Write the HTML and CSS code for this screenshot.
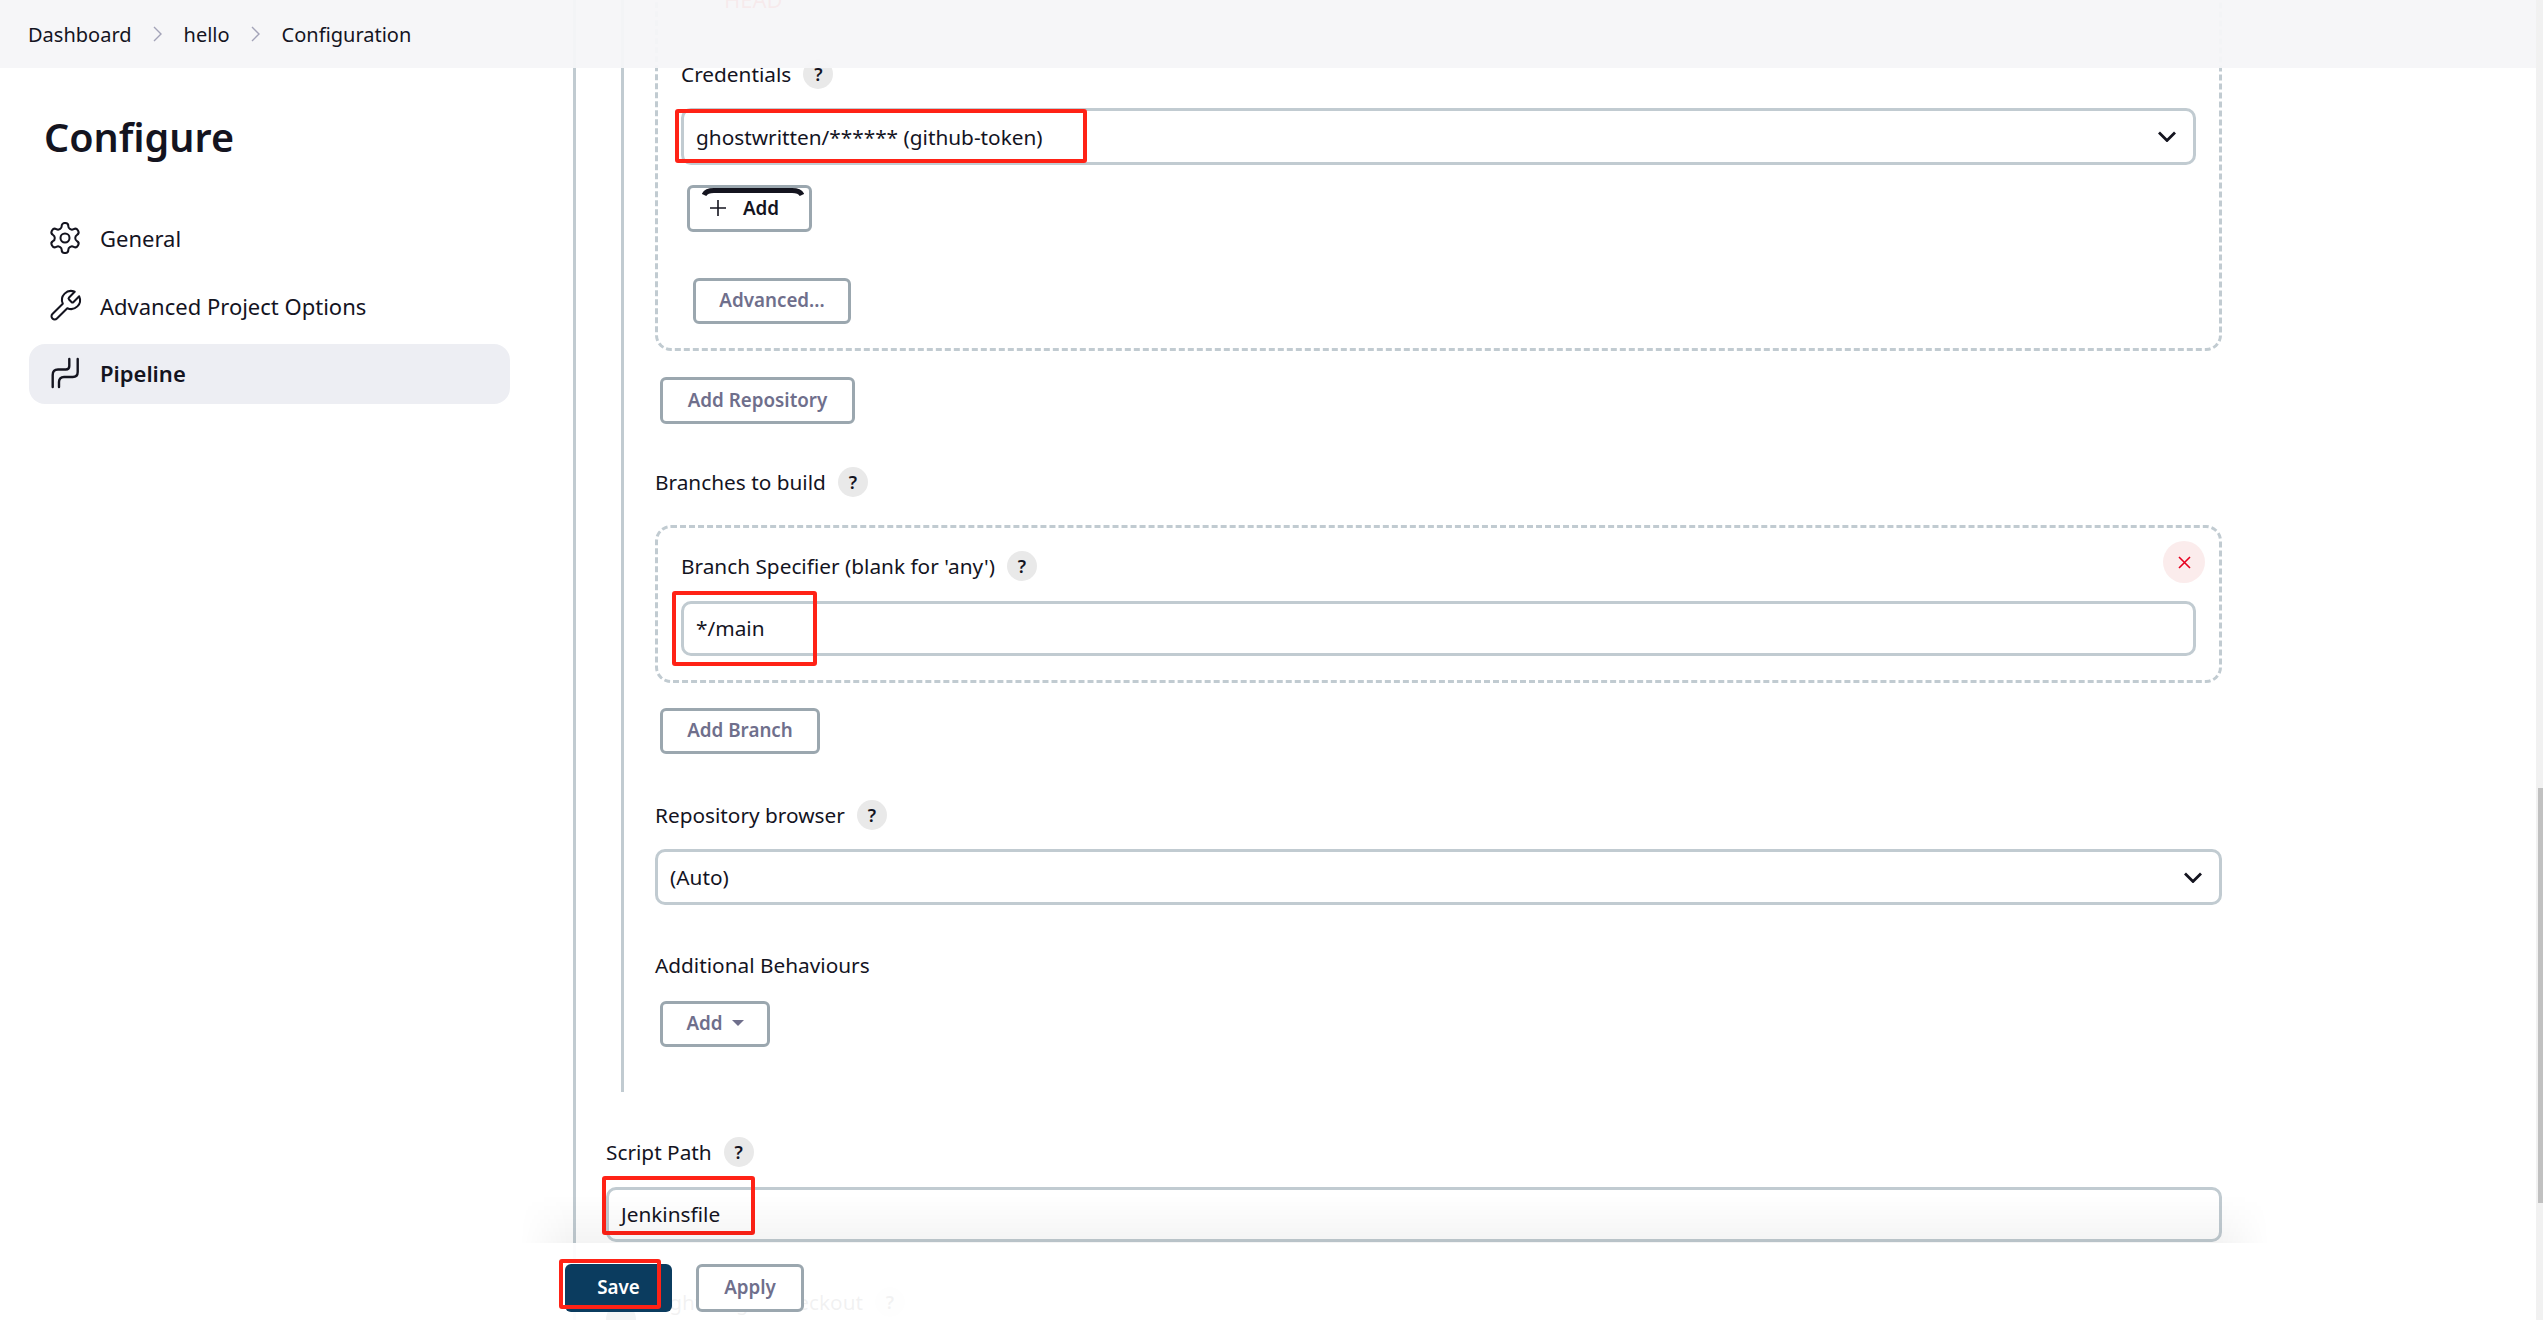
FILE: index.html
```html
<!DOCTYPE html>
<html lang="en">
<head>
    <meta charset="UTF-8">
    <title>hello Config - Jenkins</title>
    <link rel="stylesheet" href="styles.css">
</head>
<body>
    <div class="page">
        <aside class="sidebar">
            <h1>Configure</h1>
            <nav class="side-nav">
                <a class="nav-item">
                    <svg class="nav-icon" viewBox="2 2 20 20"><path d="M12.22 2h-.44a2 2 0 0 0-2 2v.18a2 2 0 0 1-1 1.73l-.43.25a2 2 0 0 1-2 0l-.15-.08a2 2 0 0 0-2.73.73l-.22.38a2 2 0 0 0 .73 2.73l.15.1a2 2 0 0 1 1 1.72v.51a2 2 0 0 1-1 1.74l-.15.09a2 2 0 0 0-.73 2.73l.22.38a2 2 0 0 0 2.73.73l.15-.08a2 2 0 0 1 2 0l.43.25a2 2 0 0 1 1 1.73V20a2 2 0 0 0 2 2h.44a2 2 0 0 0 2-2v-.18a2 2 0 0 1 1-1.73l.43-.25a2 2 0 0 1 2 0l.15.08a2 2 0 0 0 2.73-.73l.22-.39a2 2 0 0 0-.73-2.73l-.15-.08a2 2 0 0 1-1-1.74v-.5a2 2 0 0 1 1-1.74l.15-.09a2 2 0 0 0 .73-2.73l-.22-.38a2 2 0 0 0-2.73-.73l-.15.08a2 2 0 0 1-2 0l-.43-.25a2 2 0 0 1-1-1.73V4a2 2 0 0 0-2-2z"/><circle cx="12" cy="12" r="3"/></svg>
                    General
                </a>
                <a class="nav-item">
                    <svg class="nav-icon" viewBox="2 2 20 20"><path d="M14.7 6.3a1 1 0 0 0 0 1.4l1.6 1.6a1 1 0 0 0 1.4 0l3.77-3.77a6 6 0 0 1-7.94 7.94l-6.91 6.91a2.12 2.12 0 0 1-3-3l6.91-6.91a6 6 0 0 1 7.94-7.94l-3.76 3.76z"/></svg>
                    Advanced Project Options
                </a>
                <a class="nav-item active">
                    <svg class="nav-icon pipeline-icon" viewBox="0 0 30 30"><path d="M27.7 1v13q0 5-5 5H14q-5 0-5 5v5"/><path d="M19.3 1v7q0 3.5-3.5 3.5H8q-5.3 0-5.3 5.5v12"/></svg>
                    Pipeline
                </a>
            </nav>
        </aside>

        <main class="main">
            <div class="scm-section">
                <div class="repeat-box first-box">
                    <div class="ghost-head">HEAD</div>
                    <div class="label-row credentials-row">Credentials <span class="help">?</span></div>
                    <div class="field select">
                        ghostwritten/****** (github-token)
                        <svg class="chevron" viewBox="0 0 18 11"><path d="M1 1.5l8 8 8-8"/></svg>
                        <div class="mark mark-cred"></div>
                    </div>
                    <button class="btn btn-cred">
                        <svg class="arc" viewBox="0 0 102 8"><path d="M2 7Q4 2.500 12 2.500H90Q98 2.500 100 7"/></svg>
                        <svg class="plus" viewBox="0 0 16 16"><path d="M8 0v16M0 8h16"/></svg>
                        Add
                    </button>
                    <button class="btn btn-advanced">Advanced...</button>
                </div>
                <button class="btn btn-block btn-add-repo">Add Repository</button>

                <div class="label-row branches-row">Branches to build <span class="help">?</span></div>
                <div class="repeat-box branch-box">
                    <button class="remove-btn"><svg viewBox="0 0 13 13"><path d="M1 1l11 11M12 1L1 12"/></svg></button>
                    <div class="label-row">Branch Specifier (blank for 'any') <span class="help">?</span></div>
                    <div class="field branch-field">
                        */main
                        <div class="mark mark-branch"></div>
                    </div>
                </div>
                <button class="btn btn-block btn-add-branch">Add Branch</button>

                <div class="label-row browser-row">Repository browser <span class="help">?</span></div>
                <div class="field select browser-field">
                    (Auto)
                    <svg class="chevron" viewBox="0 0 18 11"><path d="M1 1.500l8 8 8-8"/></svg>
                </div>

                <div class="label-row behaviours-row">Additional Behaviours</div>
                <button class="btn btn-block btn-behaviours">Add <span class="caret"></span></button>
            </div>

            <div class="label-row script-row">Script Path <span class="help">?</span></div>
            <div class="field script-field">
                Jenkinsfile
                <div class="mark mark-script"></div>
            </div>
            <div class="label-row checkout-row"><span class="checkbox"></span>Lightweight checkout <span class="help">?</span></div>
        </main>

        <div class="scrollbar"><div class="scrollbar-thumb"></div></div>

        <!-- sticky bars sit over the scrolling form -->
        <header class="topbar">
            <span>Dashboard</span>
            <svg class="crumb-sep" viewBox="0 0 10 16"><path d="M1 1l7 7-7 7"/></svg>
            <span>hello</span>
            <svg class="crumb-sep" viewBox="0 0 10 16"><path d="M1 1l7 7-7 7"/></svg>
            <span>Configuration</span>
        </header>

        <footer class="bottom-bar">
            <button class="btn btn-save">Save<div class="mark mark-save"></div></button>
            <button class="btn btn-apply">Apply</button>
        </footer>
    </div>
</body>
</html>
```

FILE: styles.css
```css
:root {
    --text: #14141f;
    --muted: #6f6f8c;
    --line: #c1cbd1;
    --btn-border: #9ba7af;
    --red: #ff2216;
}

* {
    margin: 0;
    padding: 0;
    box-sizing: border-box;
}

html, body {
    height: 100%;
    overflow: hidden;
}

body {
    font-family: "Noto Sans", sans-serif;
    font-size: 20.8px;
    color: var(--text);
    background: #fff;
}

.page {
    position: relative;
    display: flex;
    height: 1320px;
    overflow: hidden;
}

/* sidebar */
.sidebar {
    flex: 0 0 573px;
    padding: 113px 0 0 29px;
}

.sidebar h1 {
    padding-left: 15px;
    font-size: 39.5px;
    line-height: 48px;
    font-weight: 600;
}

.side-nav {
    display: flex;
    flex-direction: column;
    gap: 7.5px;
    width: 481px;
    margin-top: 48px;
}

.nav-item {
    display: flex;
    align-items: center;
    gap: 20px;
    height: 60px;
    padding: 0 0 2px 21px;
    border-radius: 16px;
    font-size: 22px;
}

.nav-item.active {
    background: #edeef3;
    font-weight: 600;
}

.nav-icon {
    width: 30px;
    height: 30px;
    overflow: visible;
    fill: none;
    stroke: var(--text);
    stroke-width: 1.35;
    stroke-linecap: round;
    stroke-linejoin: round;
}

.pipeline-icon {
    stroke-width: 2.4;
}

/* main form */
.main {
    flex: 1;
    min-width: 0;
    padding: 0 314px 0 30px;
    border-left: 3px solid var(--line);
}

.scm-section {
    margin-left: 15px;
    padding: 0 0 45px 31px;
    border-left: 3px solid var(--line);
}

.repeat-box {
    position: relative;
    padding: 0 23px 24px;
    border: 3px dashed var(--line);
    border-radius: 16px;
}

.first-box {
    margin-top: -30px;
    padding-top: 12px;
}

.ghost-head {
    height: 30px;
    padding-left: 43px;
    line-height: 28px;
    font-size: 22px;
    color: var(--red);
}

.label-row {
    display: flex;
    align-items: center;
    gap: 12px;
    height: 30px;
    padding-bottom: 2px;
    white-space: nowrap;
}

.help {
    display: flex;
    flex: none;
    align-items: center;
    justify-content: center;
    width: 30px;
    height: 30px;
    border-radius: 50%;
    background: #e9e9e9;
    font-size: 18px;
    font-weight: 600;
}

.credentials-row { margin-top: 45px; }
.branches-row { margin-top: 44px; }
.browser-row { margin-top: 47px; }
.behaviours-row { margin-top: 46px; }
.script-row { margin-top: 46px; }

.checkout-row {
    margin-top: 46px;
}

.checkbox {
    flex: none;
    width: 30px;
    height: 30px;
    margin: 34px 5px 0 0;
    border-radius: 50%;
    background: #30404d;
}

.branch-box {
    margin-top: 27px;
    padding-top: 24px;
}

.field {
    position: relative;
    display: flex;
    align-items: center;
    height: 55px;
    margin-top: 19px;
    padding-left: 12px;
    border: 3px solid var(--line);
    border-radius: 10px;
    background: #fff;
}

.branch-field, .script-field {
    padding-bottom: 2px;
}

.select {
    justify-content: space-between;
    height: 57px;
    margin-top: 18px;
    padding-right: 17px;
}

.browser-field {
    height: 56px;
}

.chevron {
    width: 18px;
    height: 11px;
    fill: none;
    stroke: var(--text);
    stroke-width: 2.8;
}

.mark {
    position: absolute;
    border: 4px solid var(--red);
    border-radius: 3px;
    pointer-events: none;
}

.mark-cred { left: -9px; top: -2px; width: 412px; height: 54px; }
.mark-branch { left: -12px; top: -13px; width: 145px; height: 75px; }
.mark-script { left: -7px; top: -14px; width: 153px; height: 59px; }
.mark-save { left: -6px; top: -5px; width: 102px; height: 50px; }

/* buttons */
.btn {
    position: relative;
    display: flex;
    align-items: center;
    justify-content: center;
    height: 46px;
    padding-bottom: 2px;
    border: 3px solid var(--btn-border);
    border-radius: 6px;
    background: #fff;
    color: var(--muted);
    font-family: inherit;
    font-size: 18.8px;
    font-weight: 600;
}

.btn-cred {
    width: 125px;
    height: 47px;
    margin: 20px 0 0 6px;
    padding-right: 10px;
    gap: 17px;
    color: var(--text);
}

.arc {
    position: absolute;
    left: 12px;
    top: 0;
    width: 102px;
    height: 8px;
    fill: none;
    stroke: var(--text);
    stroke-width: 5;
}

.plus {
    width: 16px;
    height: 16px;
    stroke: var(--text);
    stroke-width: 1.6;
}

.btn-advanced {
    width: 158px;
    margin: 46px 0 0 12px;
}

.btn-block { margin-left: 5px; }

.btn-add-repo {
    width: 195px;
    height: 47px;
    margin-top: 26px;
}

.btn-add-branch {
    width: 160px;
    margin-top: 25px;
}

.btn-behaviours {
    width: 110px;
    margin-top: 20px;
    gap: 9px;
}

.caret {
    width: 0;
    height: 0;
    border-left: 6px solid transparent;
    border-right: 6px solid transparent;
    border-top: 6px solid var(--muted);
}

.remove-btn {
    position: absolute;
    top: 13px;
    right: 14px;
    display: flex;
    align-items: center;
    justify-content: center;
    width: 42px;
    height: 42px;
    border: none;
    border-radius: 50%;
    background: #fbecec;
}

.remove-btn svg {
    width: 13px;
    height: 13px;
    stroke: #e6001f;
    stroke-width: 1.6;
}

/* scrollbar */
.scrollbar {
    flex: 0 0 7px;
    background: #f1f1f1;
}

.scrollbar-thumb {
    height: 415px;
    margin: 788px 0 0 2px;
    background: #c1c1c1;
}

/* sticky bars */
.topbar {
    position: absolute;
    top: 0;
    left: 0;
    right: 7px;
    display: flex;
    align-items: center;
    gap: 21px;
    height: 68px;
    padding-left: 28px;
    font-size: 20px;
    background: rgba(245, 245, 248, 0.95);
}

.crumb-sep {
    width: 10px;
    height: 16px;
    fill: none;
    stroke: #a3a3b8;
    stroke-width: 1.4;
}

.bottom-bar {
    position: absolute;
    top: 1243px;
    left: 0;
    right: 7px;
    bottom: 0;
    display: flex;
    align-items: flex-start;
    gap: 24px;
    padding: 21px 0 0 565px;
    background: rgba(255, 255, 255, 0.94);
}

.bottom-bar::before {
    content: "";
    position: absolute;
    top: -48px;
    left: 520px;
    right: 267px;
    height: 48px;
    background: linear-gradient(rgba(0, 0, 0, 0), rgba(0, 0, 0, 0.045));
    -webkit-mask-image: linear-gradient(90deg, transparent, #000 48px, #000 calc(100% - 48px), transparent);
    mask-image: linear-gradient(90deg, transparent, #000 48px, #000 calc(100% - 48px), transparent);
}

.btn-save {
    width: 107px;
    height: 48px;
    border: none;
    background: #0b3c5f;
    color: #fff;
}

.btn-apply {
    width: 108px;
    height: 48px;
}
```
